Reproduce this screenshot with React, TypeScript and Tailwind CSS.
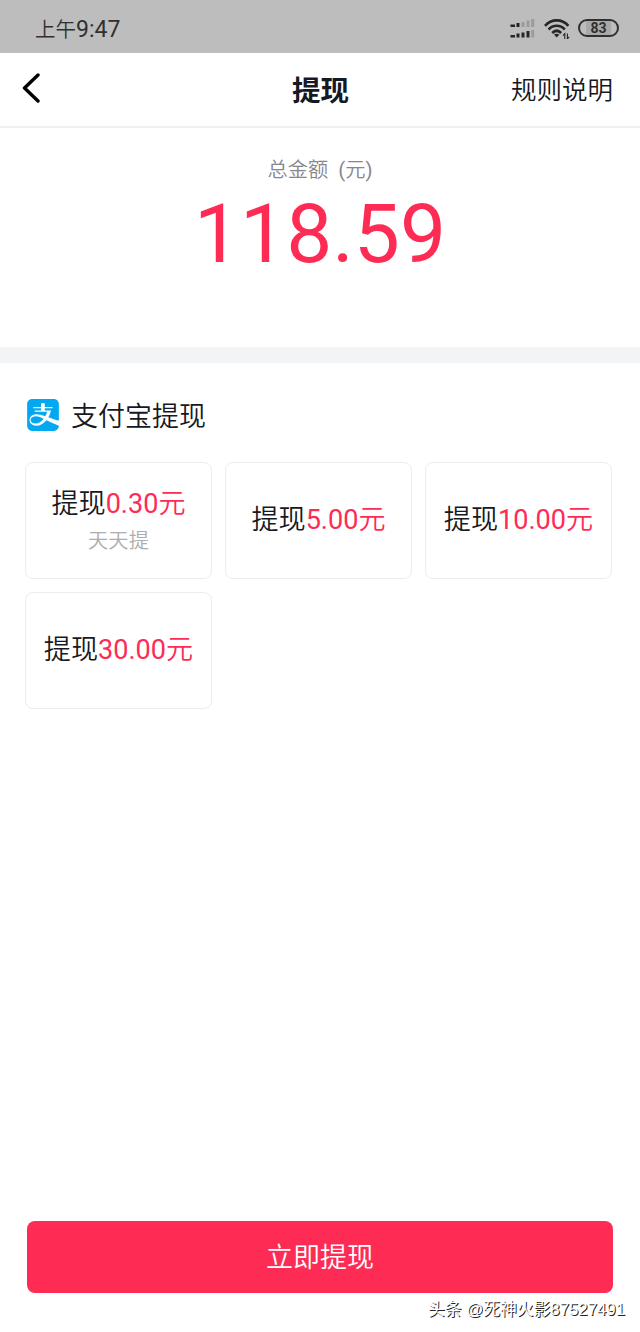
import React from "react";
import { SiAlipay } from "react-icons/si";

const options = [
  { id: 1, amount: "0.30", note: "天天提" },
  { id: 2, amount: "5.00" },
  { id: 3, amount: "10.00" },
  { id: 4, amount: "30.00" },
];

// x, y, height, lit
const signalBars = [
  { x: 0.5, y: 5.5, h: 2.5, on: true },
  { x: 6.5, y: 4, h: 4, on: true },
  { x: 11.5, y: 3, h: 5, on: false },
  { x: 16.5, y: 1.5, h: 6.5, on: false },
  { x: 21.2, y: 0, h: 8, on: false },
  { x: 0.5, y: 16, h: 2.5, on: true },
  { x: 6.5, y: 14.5, h: 4, on: true },
  { x: 11.5, y: 13.5, h: 5, on: true },
  { x: 16.5, y: 12, h: 6.5, on: true },
  { x: 21.2, y: 11, h: 7.5, on: false },
];

function StatusBar() {
  return (
    <div className="flex h-[53px] items-center justify-between bg-[#bdbdbd] pl-[35px] pr-[21px] pt-1 text-[#303030]">
      <span className="pt-0.5 text-[23px] leading-none">
        <span className="text-[20.5px]">上午</span>
        <span className="font-normal">9:47</span>
      </span>
      <div className="flex items-center">
        <svg width="25" height="19" viewBox="0 0 25 19" className="mr-[9px]">
          {signalBars.map((bar, i) => (
            <rect
              key={i}
              x={bar.x}
              y={bar.y}
              width={i % 5 === 0 ? 4.5 : 3}
              height={bar.h}
              fill={bar.on ? "#262626" : "#9b9b9b"}
            />
          ))}
        </svg>
        <svg width="26" height="20" viewBox="0 0 26 20" fill="none" className="mr-2">
          <g stroke="#262626" strokeWidth="2.6">
            <path d="M1 6.8C7.5 -0.4 17.9 -0.4 24.4 6.8" />
            <path d="M4.6 10.5C9.2 5.5 16.2 5.5 20.8 10.5" />
            <path d="M8.2 14C11 11.2 14.4 11.2 17.2 14" />
          </g>
          <path d="M10 15.6Q12.7 13.8 15.4 15.6L12.7 18.6Z" fill="#262626" />
          <path d="M20.8 20V14.7L19 16.6M23.4 14.5V19.8L25.2 17.9" stroke="#262626" strokeWidth="1.1" />
        </svg>
        <div className="mb-0.5 flex h-[18px] w-[41px] items-center justify-center rounded-full border-2 border-[#303030]">
          <span className="bg-[#a9a9a9] px-1 text-[14px] font-bold leading-[14px]">83</span>
        </div>
      </div>
    </div>
  );
}

function Header() {
  return (
    <div className="grid h-[75px] grid-cols-3 items-center border-b-2 border-[#f0f0f0] px-[22px]">
      <svg width="20" height="30" viewBox="0 0 20 30" fill="none" className="mb-1">
        <path d="M16 2L2.5 15L16 28" stroke="#000" strokeWidth="3.4" strokeLinecap="round" strokeLinejoin="round" />
      </svg>
      <h1 className="pl-px pt-1.5 text-center text-[28.5px] font-bold">提现</h1>
      <span className="pr-[5px] pt-0.5 text-right text-[25.5px]">规则说明</span>
    </div>
  );
}

function Option({ amount, note }: { amount: string; note?: string }) {
  return (
    <div className="flex h-[117px] flex-col items-center justify-center rounded-lg border-[1.5px] border-[#ececec] pb-px">
      <p className="whitespace-nowrap text-[27.1px] leading-10">
        提现
        <span className="text-[#fe2c55]">
          <span className="font-normal">{amount}</span>元
        </span>
      </p>
      {note && <p className="pt-0.5 text-[20.3px] leading-[30px] text-[#adadb0]">{note}</p>}
    </div>
  );
}

export default function App() {
  return (
    <div className="flex h-[1332px] w-[640px] flex-col bg-white font-[Roboto,'Noto_Sans_CJK_SC',sans-serif] font-[350] text-[#161823]">
      <StatusBar />
      <Header />
      <div className="flex h-[219px] flex-col items-center pt-[26px]">
        <p className="text-[20.3px] leading-8 text-[#86878c]">
          总金额&nbsp; <span className="font-normal">(</span>元<span className="font-normal">)</span>
        </p>
        <p className="text-[82px] font-normal leading-[96px] text-[#fe2c55]">118.59</p>
      </div>
      <div className="h-4 bg-[#f3f4f6]" />
      <div className="flex items-center gap-3 pl-[27px] pt-[31px]">
        <SiAlipay className="mb-px h-8 w-8 text-[#02a9f1]" />
        <span className="pt-[3px] text-[27px] leading-10">支付宝提现</span>
      </div>
      <div className="grid grid-cols-3 gap-[13px] pl-[25px] pr-[28px] pt-[25px]">
        {options.map((option) => (
          <Option key={option.id} amount={option.amount} note={option.note} />
        ))}
      </div>
      <div className="mt-auto px-[27px]">
        <button className="block h-[72px] w-full rounded-lg bg-[#fe2c55] pt-0.5 text-[27px] text-white">
          立即提现
        </button>
      </div>
      <p className="h-[39px] pr-[15px] pt-[5px] text-right font-['Liberation_Sans','Noto_Sans_CJK_SC',sans-serif] text-[16.8px] font-normal leading-6 text-white [text-shadow:1px_1px_0_#222]">
        头条 @死神火影87527491
      </p>
    </div>
  );
}
